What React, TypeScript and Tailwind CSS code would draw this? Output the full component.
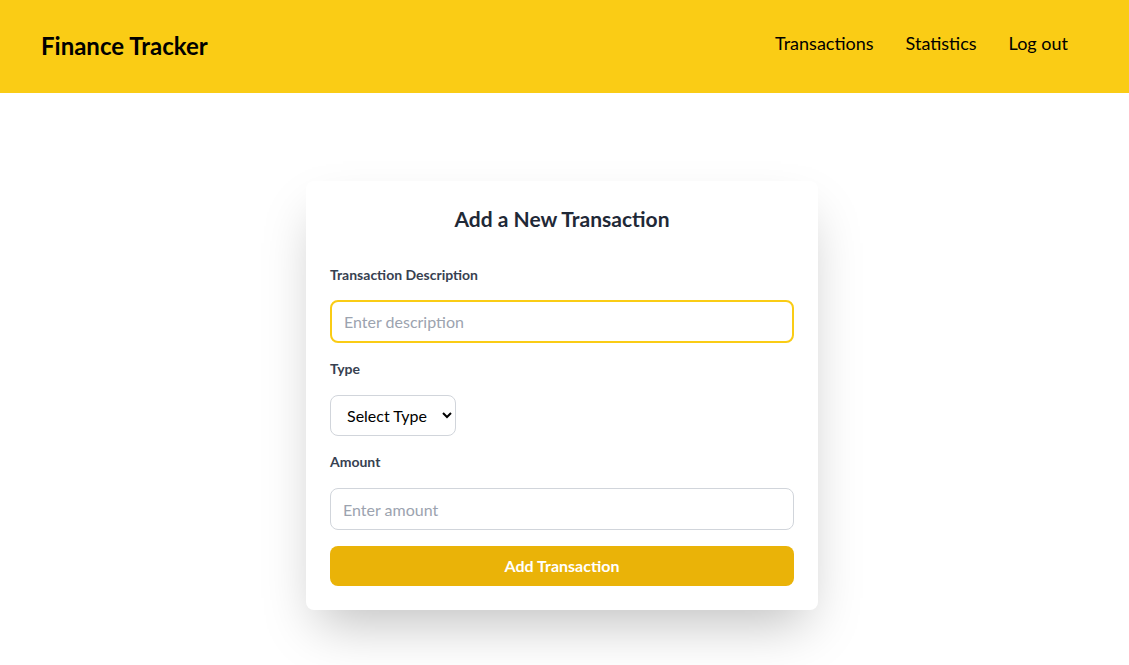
import React from "react";

export default function App() {
  return (
    <div className="min-h-screen bg-white text-black" style={{ fontFamily: "Lato, 'Noto Sans', sans-serif" }}>
      <header className="flex h-[93px] items-center justify-between bg-[#facc15] pl-[41px] pr-[61px]">
        <h1 className="mb-[2px] text-2xl font-bold text-black">Finance Tracker</h1>
        <nav className="mb-[7px] flex items-center gap-8 text-lg text-black">
          <a href="#">Transactions</a>
          <a href="#">Statistics</a>
          <a href="#">Log out</a>
        </nav>
      </header>
      <main className="flex justify-center pr-[5px] pt-[88px]">
        <div className="w-[512px] rounded-lg bg-white p-6 shadow-2xl">
          <h2 className="mb-8 text-center text-[21px] font-bold leading-7 text-[#1f2937]">Add a New Transaction</h2>
          <label className="mb-[15px] block text-sm font-bold leading-5 text-[#374151]">Transaction Description</label>
          <input
            autoFocus
            placeholder="Enter description"
            className="mb-4 block h-[43px] w-full rounded-lg border-2 border-[#facc15] px-3 text-base text-gray-900 caret-black outline-none placeholder:text-[#9ca3af]"
          />
          <label className="mb-4 block text-sm font-bold leading-5 text-[#374151]">Type</label>
          <select className="mb-4 block h-[41px] w-[126px] rounded-lg border border-[#d1d5db] bg-white px-3 text-base text-black outline-none">
            <option>Select Type</option>
            <option>Income</option>
            <option>Expense</option>
          </select>
          <label className="mb-4 block text-sm font-bold leading-5 text-[#374151]">Amount</label>
          <input
            placeholder="Enter amount"
            className="mb-4 block h-[42px] w-full rounded-lg border border-[#d1d5db] px-3 text-base text-gray-900 outline-none placeholder:text-[#9ca3af]"
          />
          <button className="block h-10 w-full rounded-lg bg-[#eab308] text-base font-bold text-white">Add Transaction</button>
        </div>
      </main>
    </div>
  );
}
